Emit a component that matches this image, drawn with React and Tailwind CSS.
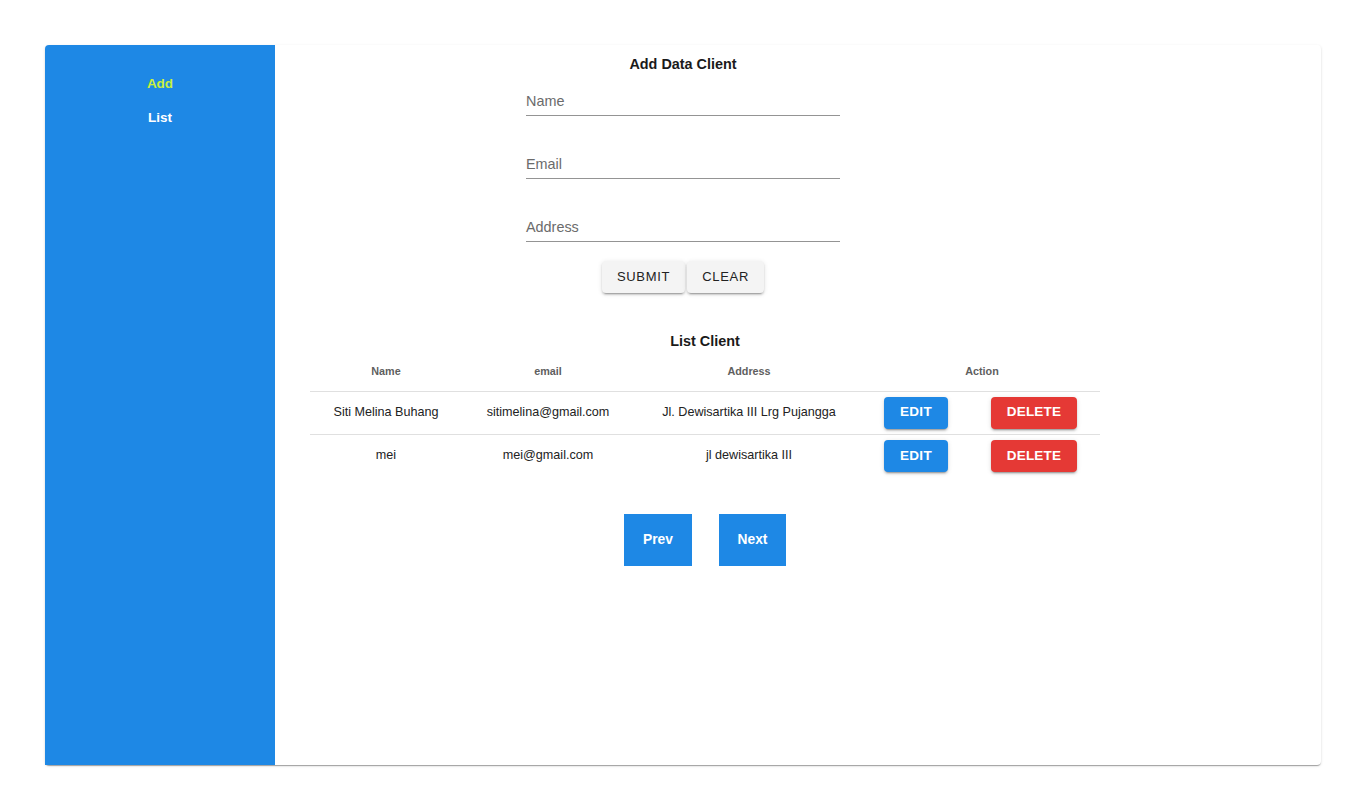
import { useState } from 'react';

const clients = [
  { name: 'Siti Melina Buhang', email: 'sitimelina@gmail.com', address: 'Jl. Dewisartika III Lrg Pujangga' },
  { name: 'mei', email: 'mei@gmail.com', address: 'jl dewisartika III' },
];

const PAPER = 'shadow-[0px_2px_1px_-1px_rgba(0,0,0,0.2),0px_1px_1px_0px_rgba(0,0,0,0.14),0px_1px_3px_0px_rgba(0,0,0,0.12)]';
const RAISED = 'shadow-[0px_3px_1px_-2px_rgba(0,0,0,0.2),0px_2px_2px_0px_rgba(0,0,0,0.14),0px_1px_5px_0px_rgba(0,0,0,0.12)]';

function Field({ label }) {
  return (
    <div className="h-[40px] flex items-end border-b border-[#949494] pb-[5px]">
      <span className="text-[14.4px] leading-[17px] text-[#6b6b6b]">{label}</span>
    </div>
  );
}

export default function App() {
  const [page] = useState('add');

  return (
    <div className="min-h-screen bg-white pt-[45px] px-[45px] font-['Liberation_Sans',Arial,sans-serif]">
      <div className={`flex h-[720px] rounded ${PAPER}`}>
        {/* Sidebar */}
        <aside className="w-[230px] shrink-0 bg-[#1e88e5] rounded-tl pt-[22px] flex flex-col items-center">
          <a className={`h-[34px] flex items-center text-[13.5px] font-bold ${page === 'add' ? 'text-[#c9f03c]' : 'text-white'}`}>
            Add
          </a>
          <a className="h-[34px] flex items-center text-[13.5px] font-bold text-white">List</a>
        </aside>

        {/* Main */}
        <main className="flex-1 pt-[9px]">
          <div className="ml-[251px] w-[314px]">
            <h2 className="text-center text-[14.4px] leading-[20px] font-bold text-[#1a1a1a]">Add Data Client</h2>
            <div className="mt-[2px] flex flex-col gap-[23px]">
              <Field label="Name" />
              <Field label="Email" />
              <Field label="Address" />
            </div>
            <div className="mt-[19px] flex justify-center gap-[2px]">
              <button className={`h-[32px] px-[15px] rounded bg-[#f4f4f4] text-[13px] tracking-[0.7px] text-[#222] ${RAISED}`}>
                SUBMIT
              </button>
              <button className={`h-[32px] px-[15px] rounded bg-[#f4f4f4] text-[13px] tracking-[0.7px] text-[#222] ${RAISED}`}>
                CLEAR
              </button>
            </div>
          </div>

          <div className="ml-[35px] w-[790px] mt-[38px]">
            <h2 className="text-center text-[14.4px] leading-[20px] font-bold text-[#1a1a1a]">List Client</h2>
            <table className="w-full table-fixed border-collapse">
              <colgroup>
                <col className="w-[152px]" />
                <col className="w-[172px]" />
                <col className="w-[230px]" />
                <col className="w-[104px]" />
                <col className="w-[132px]" />
              </colgroup>
              <thead>
                <tr className="h-[40px] border-b border-[#e0e0e0]">
                  <th className="text-[10.8px] font-bold text-[#5f5f5f]">Name</th>
                  <th className="text-[10.8px] font-bold text-[#5f5f5f]">email</th>
                  <th className="text-[10.8px] font-bold text-[#5f5f5f]">Address</th>
                  <th colSpan={2} className="text-[10.8px] font-bold text-[#5f5f5f]">Action</th>
                </tr>
              </thead>
              <tbody>
                {clients.map((c, i) => (
                  <tr key={i} className={`h-[43px] ${i < clients.length - 1 ? 'border-b border-[#e0e0e0]' : ''}`}>
                    <td className="text-center text-[12.6px] text-[#222]">{c.name}</td>
                    <td className="text-center text-[12.6px] text-[#222]">{c.email}</td>
                    <td className="text-center text-[12.6px] text-[#222]">{c.address}</td>
                    <td className="text-center">
                      <button className={`h-[32px] px-[16px] rounded bg-[#1e88e5] text-white text-[13.5px] font-bold tracking-[0.3px] ${RAISED}`}>
                        EDIT
                      </button>
                    </td>
                    <td className="text-center">
                      <button className={`h-[32px] px-[16px] rounded bg-[#e53935] text-white text-[13.5px] font-bold tracking-[0.2px] ${RAISED}`}>
                        DELETE
                      </button>
                    </td>
                  </tr>
                ))}
              </tbody>
            </table>

            <div className="mt-[37px] flex justify-center gap-[27px]">
              <button className="w-[68px] h-[52px] bg-[#1e88e5] text-white text-[13.8px] font-bold">Prev</button>
              <button className="w-[67px] h-[52px] bg-[#1e88e5] text-white text-[13.8px] font-bold">Next</button>
            </div>
          </div>
        </main>
      </div>
    </div>
  );
}
